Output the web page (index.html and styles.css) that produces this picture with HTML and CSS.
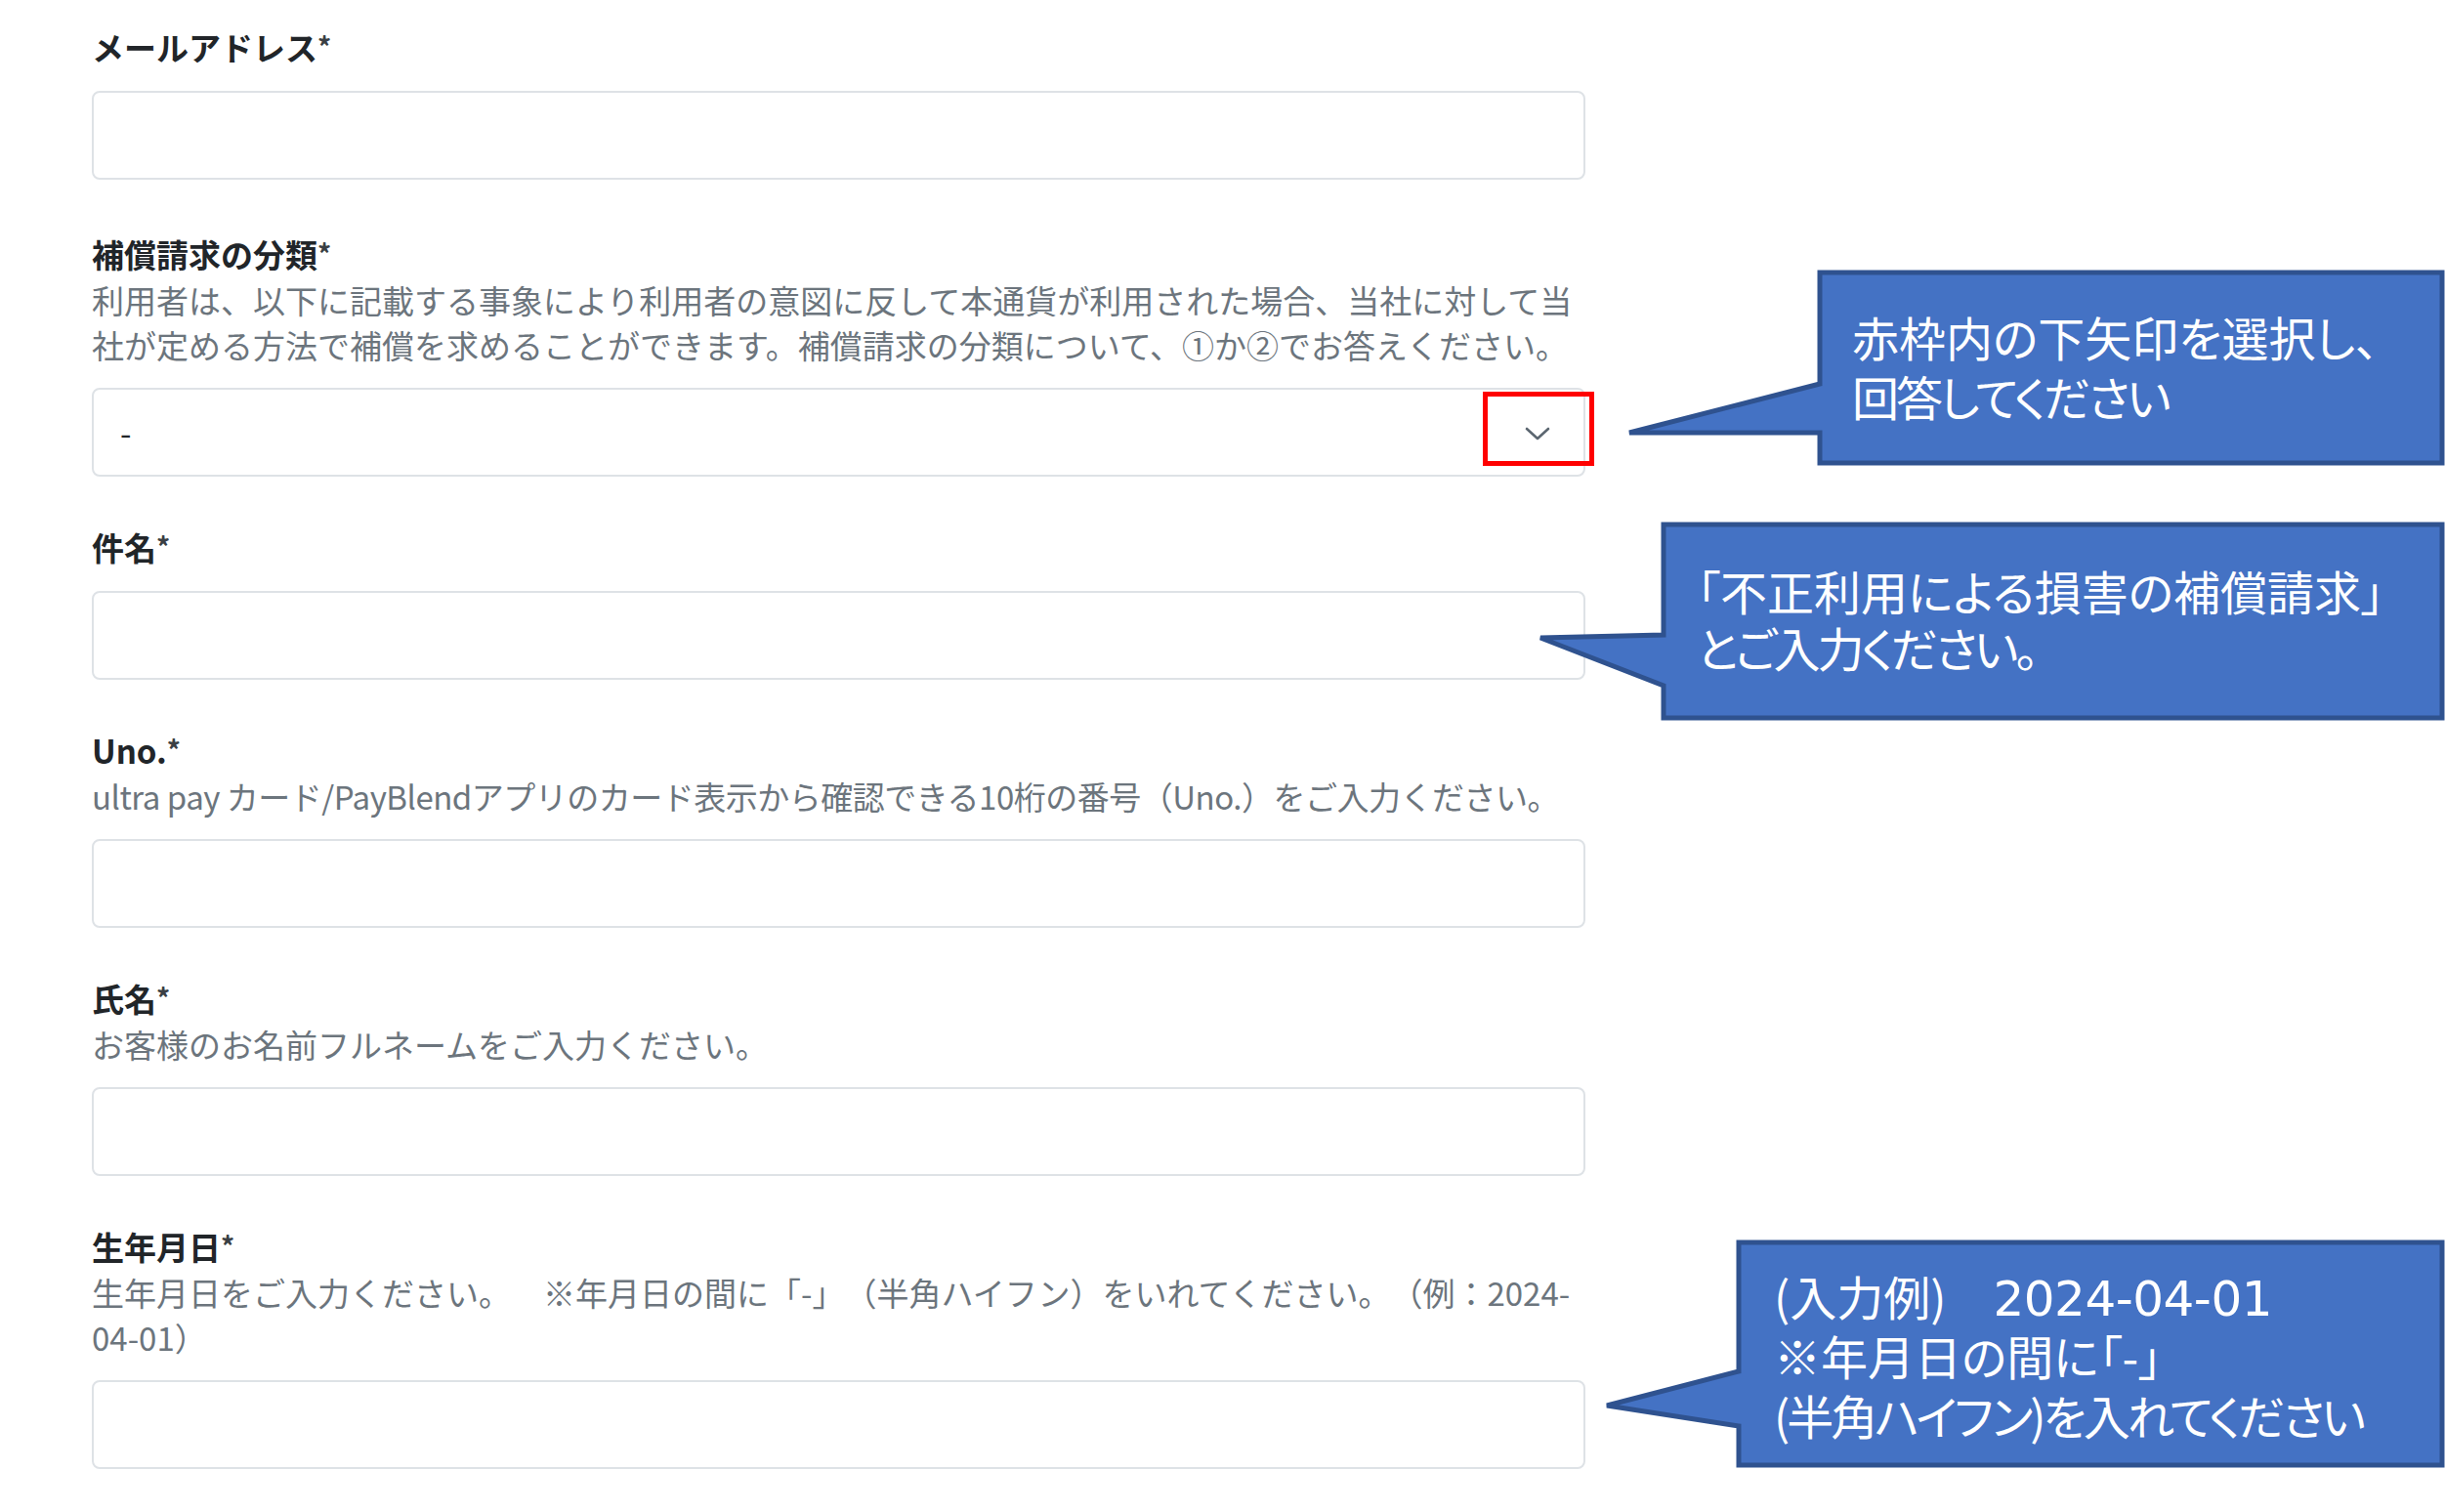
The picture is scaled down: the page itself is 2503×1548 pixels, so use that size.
FILE: index.html
```html
<!DOCTYPE html>
<html lang="ja">
<head>
<meta charset="utf-8">
<title>補償請求フォーム</title>
<link rel="stylesheet" href="styles.css">
</head>
<body>
<form class="form">
  <div class="field field-first">
    <div class="label">メールアドレス<span class="req">*</span></div>
    <input class="input" type="text">
  </div>
  <div class="field">
    <div class="label">補償請求の分類<span class="req">*</span></div>
    <div class="desc">利用者は、以下に記載する事象により利用者の意図に反して本通貨が利用された場合、当社に対して当社が定める方法で補償を求めることができます。補償請求の分類について、①か②でお答えください。</div>
    <div class="input select">
      <span class="select-value">-</span>
      <svg class="chevron" width="26" height="14" viewBox="0 0 26 14"><path d="M2 2 L13 12 L24 2" fill="none" stroke="#5b6670" stroke-width="2.6" stroke-linecap="round" stroke-linejoin="round"/></svg>
    </div>
  </div>
  <div class="field">
    <div class="label">件名<span class="req">*</span></div>
    <input class="input" type="text">
  </div>
  <div class="field">
    <div class="label">Uno.<span class="req">*</span></div>
    <div class="desc desc-tight">ultra pay カード/PayBlendアプリのカード表示から確認できる10桁の番号（Uno.）をご入力ください。</div>
    <input class="input" type="text">
  </div>
  <div class="field">
    <div class="label">氏名<span class="req">*</span></div>
    <div class="desc">お客様のお名前フルネームをご入力ください。</div>
    <input class="input" type="text">
  </div>
  <div class="field">
    <div class="label">生年月日<span class="req">*</span></div>
    <div class="desc">生年月日をご入力ください。　※年月日の間に「-」（半角ハイフン）をいれてください。（例：2024-<wbr><span class="nowrap">04-01）</span></div>
    <input class="input" type="text">
  </div>
</form>

<svg class="overlay" width="2503" height="1548" viewBox="0 0 2503 1548">
  <rect x="1520.5" y="403.5" width="109" height="71" fill="none" stroke="#ff0000" stroke-width="5"/>
  <path d="M1863 279 L2500 279 L2500 474 L1863 474 L1863 443 L1668 443 L1863 393 Z" fill="#4472c4" stroke="#2f528f" stroke-width="5"/>
  <path d="M1703 537 L2500 537 L2500 735 L1703 735 L1703 702 L1577 653 L1703 650 Z" fill="#4472c4" stroke="#2f528f" stroke-width="5"/>
  <path d="M1780 1272 L2500 1272 L2500 1500 L1780 1500 L1780 1460 L1645 1439 L1780 1404 Z" fill="#4472c4" stroke="#2f528f" stroke-width="5"/>
</svg>

<div class="note note-1">赤枠内の下矢印を選択し、<br><span class="tight">回答してください</span></div>
<div class="note note-2">「不正利用による損害の補償請求」<br><span class="tight">とご入力ください。</span></div>
<div class="note note-3">(入力例)&ensp;&ensp;<span class="date">2024-04-01</span><br>※年月日の間に「-」<br><span class="tight">(半角ハイフン)を入れてください</span></div>
</body>
</html>
```

FILE: styles.css
```css
html, body {
  margin: 0;
  padding: 0;
  background: #ffffff;
  overflow: hidden;
}

body {
  position: relative;
  width: 2503px;
  height: 1548px;
  font-family: "Noto Sans CJK JP", "Noto Sans", sans-serif;
  text-spacing-trim: space-all;
}

.form {
  width: 1529px;
  margin: 0 0 0 94px;
  padding-top: 24px;
}

.field {
  margin-bottom: 48px;
}

.field-first {
  margin-bottom: 52px;
}

.field:last-child {
  margin-bottom: 0;
}

.label {
  font-size: 33px;
  line-height: 48px;
  font-weight: 700;
  color: #212529;
}

.req {
  color: #3a3f44;
  font-size: 28px;
  line-height: 0;
  vertical-align: 3px;
}

.desc {
  font-size: 33px;
  line-height: 46px;
  color: #6c757d;
}

.desc-tight {
  letter-spacing: -0.5px;
}

.nowrap {
  white-space: nowrap;
}

.input {
  display: block;
  box-sizing: border-box;
  width: 100%;
  height: 91px;
  margin: 21px 0 0;
  padding: 0 34px;
  border: 2px solid #dee2e6;
  border-radius: 8px;
  background: #ffffff;
  font-family: inherit;
  font-size: 33px;
  outline: none;
}

.select {
  display: flex;
  align-items: center;
  justify-content: space-between;
  padding: 0 34px 0 27px;
}

.select-value {
  font-size: 33px;
  color: #212529;
  line-height: 1;
}

.chevron {
  display: block;
  margin-top: 2px;
}

.overlay {
  position: absolute;
  left: 0;
  top: 0;
  pointer-events: none;
}

.note {
  position: absolute;
  color: #ffffff;
  font-family: "Noto Sans CJK JP", "Noto Sans", sans-serif;
  font-size: 48px;
  font-feature-settings: "palt" 1;
  line-height: 60px;
  white-space: nowrap;
}

.tight {
  letter-spacing: -3px;
}

.date {
  font-family: "DejaVu Sans", sans-serif;
  font-size: 50px;
  line-height: 0;
  letter-spacing: -0.5px;
}

.note-1 {
  left: 1896px;
  top: 314px;
  line-height: 61px;
}

.note-2 {
  left: 1737px;
  top: 575px;
  line-height: 58px;
}

.note-3 {
  left: 1816px;
  top: 1296px;
  line-height: 61px;
}
```
